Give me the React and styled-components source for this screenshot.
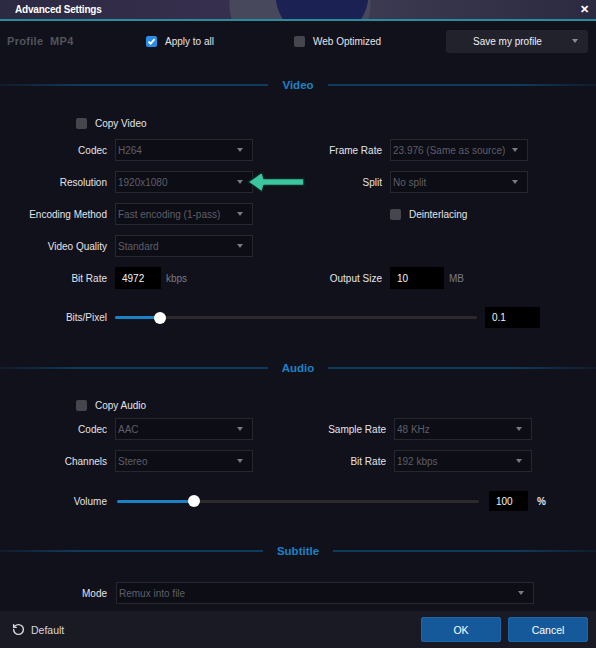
import React from 'react';
import styled, { createGlobalStyle } from 'styled-components';
import { RotateCcw } from 'lucide-react';

const GlobalStyle = createGlobalStyle`
  body {
    margin: 0;
    background: #11111b;
    font-family: "Liberation Sans", Arial, sans-serif;
  }
`;

function Check({ checked }) {
  return (
    <Box checked={checked}>
      {checked && (
        <svg width="9" height="9" viewBox="0 0 9 9">
          <path d="M1.5 4.6 L3.6 6.7 L7.6 2.2" stroke="#fff" strokeWidth="1.8" fill="none" />
        </svg>
      )}
    </Box>
  );
}

function Select({ value, width }) {
  return (
    <SelectBox width={width}>
      <span>{value}</span>
      <Caret />
    </SelectBox>
  );
}

function Slider({ percent }) {
  return (
    <Track>
      <Fill style={{ width: `${percent}%` }} />
      <Knob />
    </Track>
  );
}

function App() {
  return (
    <Window>
      <GlobalStyle />
      <TitleBar>
        <span>Advanced Settings</span>
        <Close>✕</Close>
      </TitleBar>

      <TopBar>
        <Profile>Profile&nbsp; MP4</Profile>
        <CheckLabel>
          <Check checked />
          Apply to all
        </CheckLabel>
        <CheckLabel>
          <Check />
          Web Optimized
        </CheckLabel>
        <SaveButton>
          <span>Save my profile</span>
          <Caret light />
        </SaveButton>
      </TopBar>

      <SectionHeader top={17}>Video</SectionHeader>
      <CheckRow top={24} left={76}>
        <CheckLabel>
          <Check />
          Copy Video
        </CheckLabel>
      </CheckRow>

      <FormGrid top={9} right={121}>
        <Label>Codec</Label>
        <Select value="H264" />
        <Label>Frame Rate</Label>
        <Select value="23.976 (Same as source)" />

        <Label>Resolution</Label>
        <Select value="1920x1080" />
        <Label>Split</Label>
        <Select value="No split" />

        <Label>Encoding Method</Label>
        <Select value="Fast encoding (1-pass)" />
        <Cell>
          <CheckLabel>
            <Check />
            Deinterlacing
          </CheckLabel>
        </Cell>

        <Label>Video Quality</Label>
        <Select value="Standard" />
        <span />
        <span />

        <Label>Bit Rate</Label>
        <InputCell>
          <ValueInput width={46}>4972</ValueInput>
          <Unit>kbps</Unit>
        </InputCell>
        <Label>Output Size</Label>
        <InputCell>
          <ValueInput width={54}>10</ValueInput>
          <Unit>MB</Unit>
        </InputCell>
      </FormGrid>

      <SliderRow top={18} gap={8}>
        <Label>Bits/Pixel</Label>
        <Slider percent={12.4} />
        <ValueInput width={55} height={21}>0.1</ValueInput>
      </SliderRow>

      <SectionHeader top={33}>Audio</SectionHeader>
      <CheckRow top={23} left={76}>
        <CheckLabel>
          <Check />
          Copy Audio
        </CheckLabel>
      </CheckRow>

      <FormGrid top={6} right={125}>
        <Label>Codec</Label>
        <Select value="AAC" />
        <Label>Sample Rate</Label>
        <Select value="48 KHz" />

        <Label>Channels</Label>
        <Select value="Stereo" />
        <Label>Bit Rate</Label>
        <Select value="192 kbps" />
      </FormGrid>

      <SliderRow top={19} gap={10}>
        <Label>Volume</Label>
        <Slider percent={21.3} />
        <ValueInput width={39} height={20}>100</ValueInput>
        <Percent>%</Percent>
      </SliderRow>

      <SectionHeader top={33}>Subtitle</SectionHeader>
      <ModeRow>
        <Label>Mode</Label>
        <Select value="Remux into file" width={418} />
      </ModeRow>

      <Footer>
        <DefaultLink>
          <RotateCcw size={13} strokeWidth={2.6} />
          Default
        </DefaultLink>
        <Buttons>
          <PrimaryButton>OK</PrimaryButton>
          <PrimaryButton>Cancel</PrimaryButton>
        </Buttons>
      </Footer>

      <Pointer width="62" height="26" viewBox="0 0 62 26">
        <path
          d="M2 12 L16 2 L18 8.5 L58 8.5 L58 15.5 L18 15.5 L16 22 Z"
          fill="#3cc6a0"
          stroke="#0c2624"
          strokeWidth="1.5"
          strokeLinejoin="round"
        />
      </Pointer>
    </Window>
  );
}

const Window = styled.div`
  position: relative;
  width: 596px;
  height: 648px;
  display: flex;
  flex-direction: column;
  background: #11111b;
  color: #e4e4e8;
  font-size: 10px;
  overflow: hidden;
`;

const TitleBar = styled.div`
  height: 19px;
  flex: none;
  display: flex;
  align-items: center;
  justify-content: space-between;
  padding: 0 7px 0 15px;
  border-bottom: 2px solid #2a8c9d;
  background:
    radial-gradient(circle at 322px -6px, #1b2153 0 46px, transparent 47px),
    radial-gradient(circle at 300px 2px, #48485c 0 70px, transparent 71px),
    linear-gradient(90deg, #2c2942 0%, #372f4e 38%, #3c3a52 62%, #2c2a40 100%);
  color: #ffffff;
  font-weight: bold;
  font-size: 10px;
  letter-spacing: -0.2px;
`;

const Close = styled.span`
  font-size: 11px;
  font-weight: bold;
  color: #fff;
`;

const TopBar = styled.div`
  height: 40px;
  flex: none;
  display: grid;
  grid-template-columns: 146px 148px 152px 142px;
  align-items: center;
`;

const Profile = styled.div`
  padding-left: 7px;
  color: #51545c;
  font-weight: bold;
  font-size: 11px;
  letter-spacing: 0.3px;
`;

const CheckLabel = styled.label`
  display: inline-flex;
  align-items: center;
  gap: 8px;
  color: #e4e4e8;
  font-size: 10px;
  white-space: nowrap;
`;

const Box = styled.span`
  width: 11px;
  height: 11px;
  border-radius: 2px;
  display: inline-flex;
  align-items: center;
  justify-content: center;
  background: ${(p) => (p.checked ? '#2a8ee6' : '#46464f')};
`;

const SaveButton = styled.div`
  height: 23px;
  display: flex;
  align-items: center;
  justify-content: space-between;
  padding: 0 10px 0 27px;
  background: #22222c;
  border-radius: 3px;
  color: #f0f0f0;
  font-size: 10px;
`;

const Caret = styled.span`
  width: 0;
  height: 0;
  border-left: 3.5px solid transparent;
  border-right: 3.5px solid transparent;
  border-top: 4px solid ${(p) => (p.light ? '#8a8a92' : '#7a7a82')};
  flex: none;
`;

const SectionHeader = styled.div`
  margin-top: ${(p) => p.top}px;
  height: 14px;
  flex: none;
  display: flex;
  align-items: center;
  gap: 14px;
  color: #1b82c4;
  font-weight: bold;
  font-size: 11.5px;

  &::before,
  &::after {
    content: '';
    flex: 1;
    height: 2px;
  }
  &::before {
    background: linear-gradient(90deg, rgba(14, 52, 82, 0.3), #0f3b5e 30%);
  }
  &::after {
    background: linear-gradient(90deg, #0f3b5e 70%, rgba(14, 52, 82, 0.3));
  }
`;

const CheckRow = styled.div`
  margin-top: ${(p) => p.top}px;
  padding-left: ${(p) => p.left}px;
  height: 14px;
  flex: none;
  display: flex;
  align-items: center;
`;

const FormGrid = styled.div`
  margin-top: ${(p) => p.top}px;
  flex: none;
  display: grid;
  grid-template-columns: 107px 138px ${(p) => p.right}px 138px;
  grid-auto-rows: 22px;
  column-gap: 8px;
  row-gap: 10px;
  align-items: center;
`;

const Label = styled.div`
  text-align: right;
  color: #e4e4e8;
  font-size: 10px;
  white-space: nowrap;
`;

const Cell = styled.div`
  grid-column: 4;
  display: flex;
  align-items: center;
`;

const SelectBox = styled.div`
  width: ${(p) => (p.width ? `${p.width}px` : 'auto')};
  height: 22px;
  box-sizing: border-box;
  display: flex;
  align-items: center;
  justify-content: space-between;
  padding: 0 9px 0 2px;
  background: #0d0d15;
  border: 1px solid #272731;
  color: #5e5e68;
  font-size: 10px;
  white-space: nowrap;
`;

const InputCell = styled.div`
  display: flex;
  align-items: center;
  gap: 5px;
`;

const ValueInput = styled.div`
  width: ${(p) => p.width}px;
  height: ${(p) => p.height || 22}px;
  box-sizing: border-box;
  padding-left: 7px;
  display: flex;
  align-items: center;
  background: #000;
  color: #f4f4f4;
  font-size: 10px;
  flex: none;
`;

const Unit = styled.span`
  color: #7a7a84;
  font-size: 10px;
`;

const SliderRow = styled.div`
  margin-top: ${(p) => p.top}px;
  flex: none;
  display: grid;
  grid-template-columns: 107px 362px auto auto;
  justify-content: start;
  column-gap: ${(p) => p.gap}px;
  align-items: center;
`;

const Track = styled.div`
  height: 3px;
  background: #2e2a2b;
  border-radius: 2px;
  display: flex;
  align-items: center;
`;

const Fill = styled.div`
  height: 3px;
  background: #1b82c4;
  border-radius: 2px;
`;

const Knob = styled.span`
  width: 12px;
  height: 12px;
  margin-left: -6px;
  border-radius: 50%;
  background: #ffffff;
  flex: none;
`;

const Percent = styled.span`
  margin-left: -1px;
  color: #e4e4e8;
  font-weight: bold;
  font-size: 10px;
`;

const ModeRow = styled.div`
  margin-top: 24px;
  flex: none;
  display: flex;
  align-items: center;
  gap: 9px;

  & > ${Label} {
    width: 107px;
  }
`;

const Footer = styled.div`
  margin-top: auto;
  height: 37px;
  flex: none;
  display: flex;
  align-items: center;
  justify-content: space-between;
  padding: 0 8px 0 12px;
  background: #1a1a25;
`;

const DefaultLink = styled.div`
  display: flex;
  align-items: center;
  gap: 6px;
  color: #d8d8dc;
  font-size: 10.5px;
`;

const Buttons = styled.div`
  display: flex;
  gap: 7px;
`;

const PrimaryButton = styled.div`
  width: 80px;
  height: 25px;
  box-sizing: border-box;
  display: flex;
  align-items: center;
  justify-content: center;
  background: #15599a;
  border: 1px solid #1c66ab;
  border-radius: 2px;
  color: #ffffff;
  font-size: 10.5px;
`;

const Pointer = styled.svg`
  position: absolute;
  left: 246px;
  top: 170px;
`;

export default App;
